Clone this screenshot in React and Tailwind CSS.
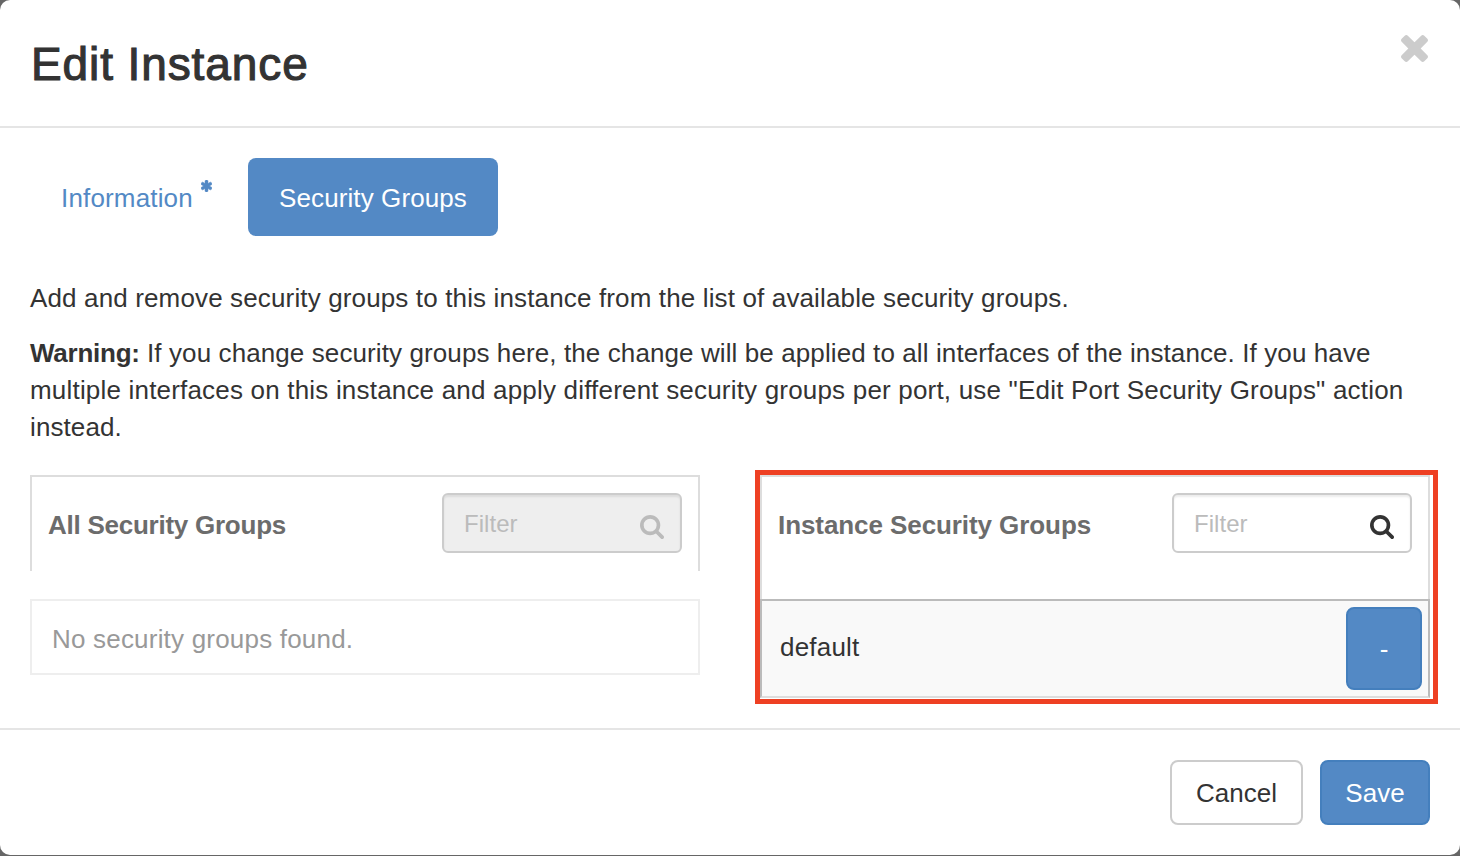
const TIMES =
  'M1490 1322q0 40-28 68l-136 136q-28 28-68 28t-68-28l-294-294-294 294q-28 28-68 28t-68-28l-136-136q-28-28-28-68t28-68l294-294-294-294q-28-28-28-68t28-68l136-136q28-28 68-28t68 28l294 294 294-294q28-28 68-28t68 28l136 136q28 28 28 68t-28 68l-294 294 294 294q28 28 28 68z';
const SEARCH =
  'M1216 832q0-185-131.5-316.5t-316.5-131.5-316.5 131.5-131.5 316.5 131.5 316.5 316.5 131.5 316.5-131.5 131.5-316.5zm512 832q0 52-38 90t-90 38q-54 0-90-38l-343-342q-179 124-399 124-143 0-273.5-55.5t-225-150-150-225-55.5-273.5 55.5-273.5 150-225 225-150 273.5-55.5 273.5 55.5 225 150 150 225 55.5 273.5q0 220-124 399l343 343q37 37 37 90z';
const ASTERISK =
  'M1546 1050q46 26 59.5 77.5t-12.5 97.5l-64 110q-26 46-77.5 59.5t-97.5-12.5l-266-153v307q0 52-38 90t-90 38h-128q-52 0-90-38t-38-90v-307l-266 153q-46 26-97.5 12.5t-77.5-59.5l-64-110q-26-46-12.5-97.5t59.5-77.5l266-154-266-154q-46-26-59.5-77.5t12.5-97.5l64-110q26-46 77.5-59.5t97.5 12.5l266 153v-307q0-52 38-90t90-38h128q52 0 90 38t38 90v307l266-153q46-26 97.5-12.5t77.5 59.5l64 110q26 46 12.5 97.5t-59.5 77.5l-266 154z';

function Filter({ disabled }) {
  return (
    <div
      className={`flex h-[60px] w-[240px] items-center rounded-[6px] border-2 border-[#ccc] pr-4 pl-5 shadow-[inset_0_2px_2px_rgba(0,0,0,0.075)] ${
        disabled ? 'bg-[#eee]' : 'bg-white'
      }`}
    >
      <input
        type="text"
        placeholder="Filter"
        disabled={disabled}
        className="w-0 min-w-0 flex-1 bg-transparent text-[24px] tracking-[0.05px] outline-none placeholder:text-[#bbb]"
      />
      <svg
        viewBox="64 128 1664 1664"
        className={`mt-[7px] size-6 ${disabled ? 'text-[#bbb]' : 'text-[#333]'}`}
        fill="currentColor"
      >
        <path d={SEARCH} />
      </svg>
    </div>
  );
}

function PanelHeader({ title, titleClass, disabled }) {
  return (
    <div className="flex h-24 items-start justify-between border-2 border-b-0 border-[#ddd] px-4 pt-4">
      <h2 className={`mt-[14px] text-[26px] leading-[37px] font-bold whitespace-nowrap text-[#6c6c6c] ${titleClass}`}>
        {title}
      </h2>
      <Filter disabled={disabled} />
    </div>
  );
}

export default function App() {
  return (
    <div className="h-[856px] w-[1460px] overflow-hidden bg-[#666] font-['Liberation_Sans',Arial,sans-serif] text-[26px] leading-[37px] text-[#333]">
      <div className="flex h-[855px] flex-col rounded-[10px] bg-white">
        <header className="flex h-32 shrink-0 items-start justify-between border-b-2 border-[#e5e5e5] pr-8 pl-[30px]">
          <h1 className="mt-[38px] pl-px text-[46px] leading-[52px] tracking-[0.9px] whitespace-nowrap [-webkit-text-stroke:1.1px_#333]">
            Edit Instance
          </h1>
          <button type="button" aria-label="Close" className="mt-[35px]">
            <svg viewBox="302 366 1188 1188" className="size-[27px] text-[#ccc]" fill="currentColor">
              <path d={TIMES} />
            </svg>
          </button>
        </header>

        <main className="h-[600px] shrink-0 px-[30px] pt-[30px]">
          <nav className="flex h-[78px] gap-1">
            <a className="flex w-[214px] items-start pt-[22px] pl-[31px] text-[#5389c5]">
              <span className="w-[132px] tracking-[0.16px]">Information</span>
              <svg viewBox="180 128 1432 1536" className="ml-[8px] h-[12px] w-[11px]" fill="currentColor" stroke="currentColor" strokeWidth="60">
                <path d={ASTERISK} />
              </svg>
            </a>
            <a className="flex w-[250px] items-start justify-center rounded-[8px] bg-[#5389c5] pt-[22px] tracking-[0.1px] text-white">
              Security Groups
            </a>
          </nav>

          <p className="mt-11 tracking-[0.14px] whitespace-nowrap">
            Add and remove security groups to this instance from the list of available security groups.
          </p>
          <p className="mt-[18px] whitespace-nowrap">
            <span className="block tracking-[0.1px]">
              <b className="tracking-[-0.25px]">Warning:</b> If you change security groups here, the change will be
              applied to all interfaces of the instance. If you have
            </span>
            <span className="block tracking-[0.19px]">
              multiple interfaces on this instance and apply different security groups per port, use "Edit Port
              Security Groups" action
            </span>
            <span className="block tracking-[0.1px]">instead.</span>
          </p>

          <div className="mt-[24px] flex items-start justify-between">
            <section className="mt-[5px] w-[670px]">
              <PanelHeader title="All Security Groups" titleClass="tracking-[-0.25px]" disabled />
              <div className="mt-7 h-[76px] border-2 border-[#eee] pt-5 pl-5 tracking-[0.2px] text-[#999]">
                No security groups found.
              </div>
            </section>

            <section className="-mr-2 h-[234px] w-[683px] border-[5px] border-[#ee4023]">
              <div className="w-[670px]">
                <div className="h-[124px] border-x-2 border-[#ddd]">
                  <div className="-mx-[2px]">
                    <PanelHeader title="Instance Security Groups" titleClass="tracking-[-0.08px]" />
                  </div>
                </div>
                <div className="flex h-[99px] items-start justify-between border-2 border-[#bbb] border-b-[#ddd] bg-[#f9f9f9] pt-1.5 pr-1.5 pl-[18px]">
                  <span className="mt-[22px] tracking-[0.2px]">default</span>
                  <button
                    type="button"
                    className="h-[83px] w-[76px] rounded-[8px] border-2 border-[#447fbd] bg-[#5389c5] pt-px text-white"
                  >
                    -
                  </button>
                </div>
              </div>
            </section>
          </div>
        </main>

        <footer className="flex flex-1 items-start justify-end gap-[17px] border-t-2 border-[#e5e5e5] pt-[30px] pr-[30px]">
          <button type="button" className="h-[65px] w-[133px] rounded-[8px] border-2 border-[#ccc] bg-white pt-0.5">
            Cancel
          </button>
          <button
            type="button"
            className="h-[65px] w-[110px] rounded-[8px] border-2 border-[#447fbd] bg-[#5389c5] pt-0.5 text-white"
          >
            Save
          </button>
        </footer>
      </div>
    </div>
  );
}
